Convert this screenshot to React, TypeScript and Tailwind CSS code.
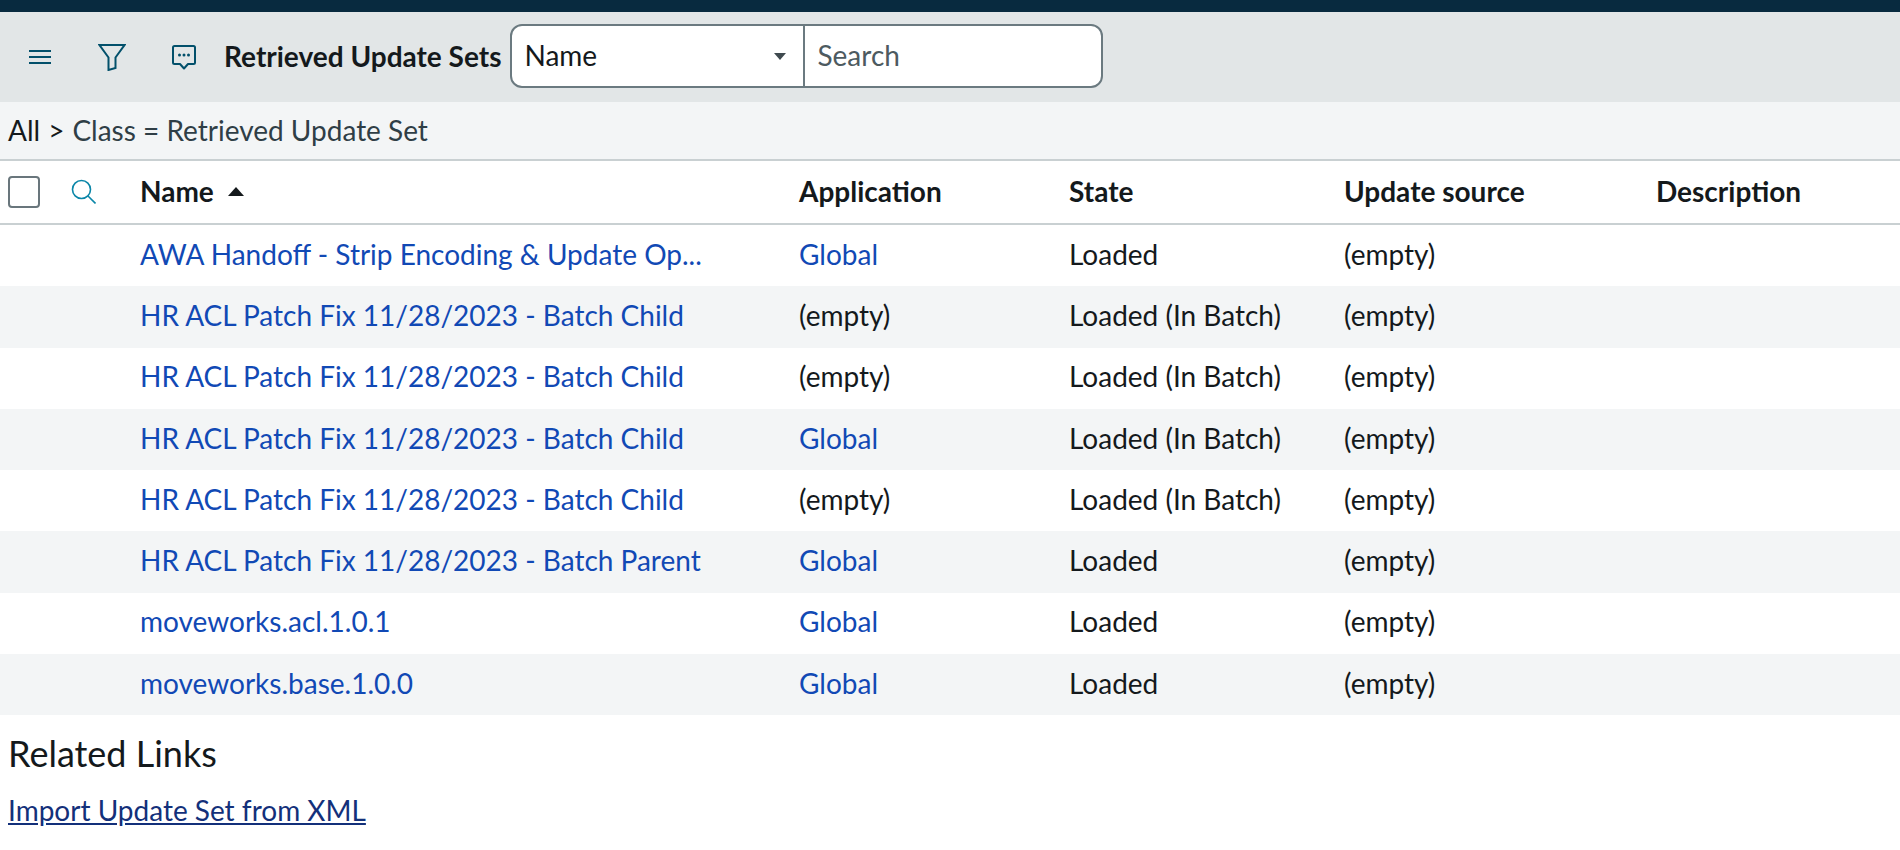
import React from "react";

interface Row {
  name: string;
  app: string;
  state: string;
}

const rows: Row[] = [
  { name: "AWA Handoff - Strip Encoding & Update Op...", app: "Global", state: "Loaded" },
  { name: "HR ACL Patch Fix 11/28/2023 - Batch Child", app: "(empty)", state: "Loaded (In Batch)" },
  { name: "HR ACL Patch Fix 11/28/2023 - Batch Child", app: "(empty)", state: "Loaded (In Batch)" },
  { name: "HR ACL Patch Fix 11/28/2023 - Batch Child", app: "Global", state: "Loaded (In Batch)" },
  { name: "HR ACL Patch Fix 11/28/2023 - Batch Child", app: "(empty)", state: "Loaded (In Batch)" },
  { name: "HR ACL Patch Fix 11/28/2023 - Batch Parent", app: "Global", state: "Loaded" },
  { name: "moveworks.acl.1.0.1", app: "Global", state: "Loaded" },
  { name: "moveworks.base.1.0.0", app: "Global", state: "Loaded" },
];

const columns = "grid grid-cols-[140px_659px_270px_275px_312px_1fr]";

const App: React.FC = () => {
  return (
    <div className="h-[850px] w-full overflow-hidden bg-white font-['Lato','Noto_Sans',sans-serif] text-[28px] text-[#14191c]">
      <div className="h-3 bg-[#082a3f]" />

      <div className="flex h-[90px] items-center bg-[#e2e6e7]">
        <svg width="24" height="16" viewBox="0 0 24 16" fill="none" className="ml-[28px] text-[#02506b]">
          <path d="M1 2h22M1 8h22M1 14h22" stroke="currentColor" strokeWidth="2" />
        </svg>
        <svg width="28" height="28" viewBox="0 0 28 28" fill="none" className="ml-[46px] text-[#02506b]">
          <path d="M1.5 2h25L17.5 14.5V25l-7 2V14.5z" stroke="currentColor" strokeWidth="2" strokeLinejoin="miter" />
        </svg>
        <svg width="26" height="26" viewBox="0 0 26 26" fill="none" className="ml-[45px] text-[#02506b]">
          <path d="M3.5 2h19a1.5 1.5 0 0 1 1.5 1.5v15a1.5 1.5 0 0 1-1.5 1.5H17l-4 4.5L9 20H3.5A1.5 1.5 0 0 1 2 18.5v-15A1.5 1.5 0 0 1 3.5 2z" stroke="currentColor" strokeWidth="2" strokeLinejoin="round" />
          <circle cx="8.5" cy="11" r="1.5" fill="currentColor" />
          <circle cx="13" cy="11" r="1.5" fill="currentColor" />
          <circle cx="17.5" cy="11" r="1.5" fill="currentColor" />
        </svg>
        <span className="mb-[2px] ml-[27px] font-bold whitespace-nowrap">Retrieved Update Sets</span>
        <div className="mb-[2px] ml-[9px] flex h-[64px] w-[593px] overflow-hidden rounded-[12px] border-2 border-[#6b7a80] bg-white">
          <div className="flex w-[293px] items-center justify-between border-r-2 border-[#6b7a80] pr-[17px] pb-[2px] pl-[12px]">
            <span>Name</span>
            <span className="mt-[2px] h-0 w-0 border-x-[6px] border-t-[7px] border-x-transparent border-t-[#3f4a4f]" />
          </div>
          <div className="flex flex-1 items-center pb-[2px] pl-[12px] text-[#4d5a60]">Search</div>
        </div>
      </div>

      <div className="flex h-[59px] items-center border-b-2 border-[#c9d0d2] bg-[#f3f5f6] pb-[2px] pl-2">
        <span>All</span>
        <span className="ml-[8px]">&gt;</span>
        <span className="ml-[8px] text-[#2f3e46]">Class = Retrieved Update Set</span>
      </div>

      <div className={`${columns} h-[64px] items-center border-b-2 border-[#c9d0d2] pb-[2px] font-bold`}>
        <div className="flex items-center pl-2">
          <span className="mt-[2px] h-8 w-8 rounded-[4px] border-2 border-[#69767c]" />
          <svg width="25" height="25" viewBox="0 0 25 25" fill="none" className="ml-[31px] text-[#0a86a8]">
            <circle cx="10.5" cy="10.5" r="9" stroke="currentColor" strokeWidth="1.6" />
            <path d="M17 17l7.5 7.5" stroke="currentColor" strokeWidth="1.6" />
          </svg>
        </div>
        <div className="flex items-center">
          Name
          <span className="ml-[14px] h-0 w-0 border-x-[8px] border-b-[9px] border-x-transparent border-b-[#14191c]" />
        </div>
        <div>Application</div>
        <div>State</div>
        <div>Update source</div>
        <div>Description</div>
      </div>

      {rows.map((row, i) => (
        <div
          key={i}
          className={`${columns} h-[61.3px] items-center pb-[4px] ${i % 2 === 1 ? "bg-[#f3f5f6]" : "bg-white"}`}
        >
          <div />
          <div className="text-[#1149b5]">{row.name}</div>
          <div className={row.app === "Global" ? "text-[#1149b5]" : ""}>{row.app}</div>
          <div>{row.state}</div>
          <div>(empty)</div>
        </div>
      ))}

      <div className="pt-[15px] pl-2 text-[36px] leading-[46px]">Related Links</div>
      <div className="mt-[13px] pl-2">
        <a href="#" className="text-[#13307a] underline">Import Update Set from XML</a>
      </div>
    </div>
  );
};

export default App;
